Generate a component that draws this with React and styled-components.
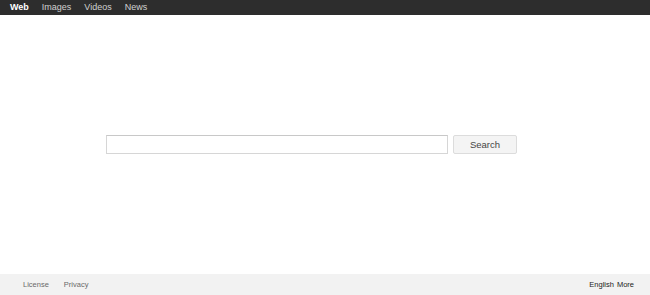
import React from 'react';
import styled, { createGlobalStyle } from 'styled-components';

const GlobalStyle = createGlobalStyle`
  html, body {
    margin: 0;
    padding: 0;
    background: #fff;
  }
  body {
    font-family: "Liberation Sans", Arial, sans-serif;
  }
`;

const Page = styled.div`
  height: 295px;
  display: flex;
  flex-direction: column;
`;

const TopBar = styled.nav`
  height: 15px;
  background: #2d2d2d;
  display: flex;
  align-items: center;
  padding-left: 10px;
  gap: 13px;
`;

const NavLink = styled.a`
  font-size: 9px;
  line-height: 15px;
  color: ${(props) => (props.active ? '#fff' : '#d0d0d0')};
  font-weight: ${(props) => (props.active ? 'bold' : 'normal')};
  text-decoration: none;
`;

const Main = styled.main`
  flex: 1;
  display: flex;
  align-items: center;
  padding-left: 106px;
  gap: 5px;
`;

const SearchInput = styled.input`
  box-sizing: border-box;
  width: 342px;
  height: 19px;
  border: 1px solid #d6d6d6;
  border-top-color: #c8c8c8;
  outline: none;
  padding: 0 4px;
  margin: 0;
`;

const SearchButton = styled.button`
  box-sizing: border-box;
  width: 64px;
  height: 19px;
  margin: 0;
  background: #f4f4f4;
  border: 1px solid #dcdcdc;
  border-radius: 2px;
  font-family: "Liberation Sans", Arial, sans-serif;
  font-size: 9.5px;
  color: #444;
  padding: 0;
`;

const Footer = styled.footer`
  height: 21px;
  background: #f2f2f2;
  display: flex;
  align-items: center;
  justify-content: space-between;
  padding: 0 16px 0 23px;
`;

const FooterGroup = styled.div`
  display: flex;
  gap: ${(props) => props.gap}px;
`;

const FooterLink = styled.span`
  font-size: 7.5px;
  color: ${(props) => (props.dark ? '#222' : '#6a6a6a')};
`;

export default function App() {
  return (
    <>
      <GlobalStyle />
      <Page>
        <TopBar>
          <NavLink active>Web</NavLink>
          <NavLink>Images</NavLink>
          <NavLink>Videos</NavLink>
          <NavLink>News</NavLink>
        </TopBar>
        <Main>
          <SearchInput type="text" />
          <SearchButton>Search</SearchButton>
        </Main>
        <Footer>
          <FooterGroup gap={15}>
            <FooterLink>License</FooterLink>
            <FooterLink>Privacy</FooterLink>
          </FooterGroup>
          <FooterGroup gap={3}>
            <FooterLink dark>English</FooterLink>
            <FooterLink dark>More</FooterLink>
          </FooterGroup>
        </Footer>
      </Page>
    </>
  );
}
